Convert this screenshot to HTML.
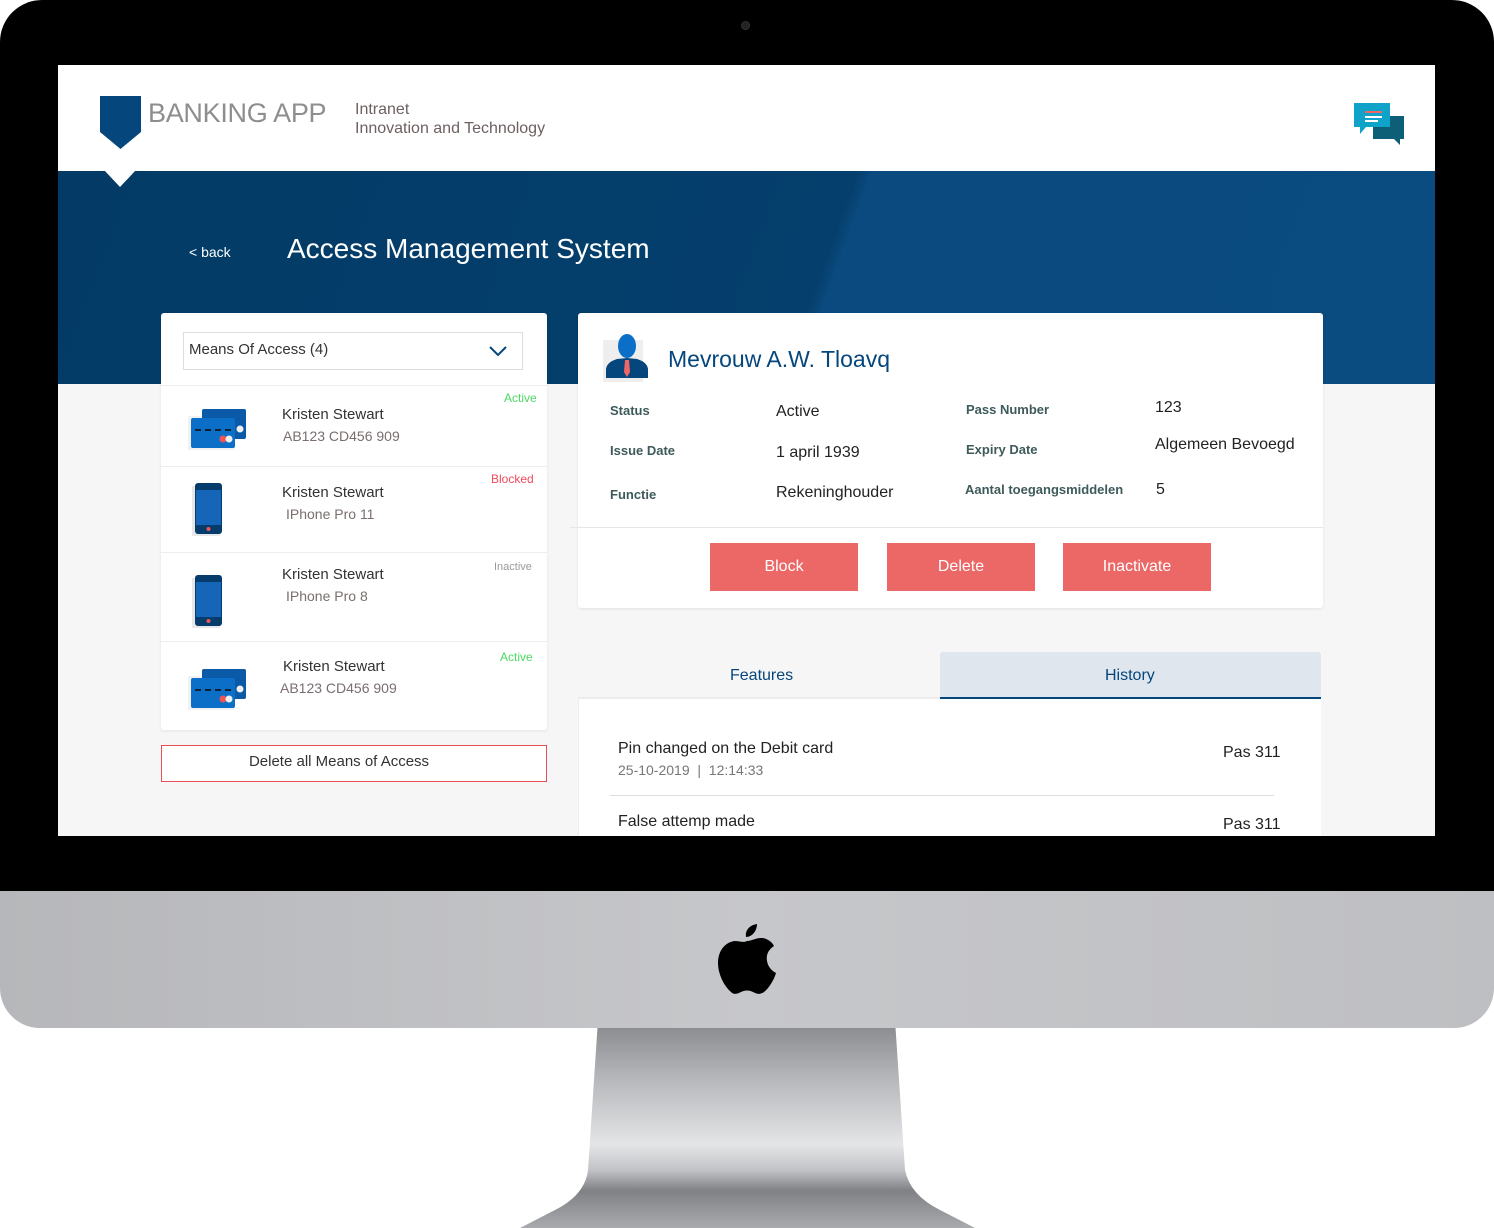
<!DOCTYPE html>
<html><head><meta charset="utf-8"><style>
*{margin:0;padding:0;box-sizing:border-box}
body{width:1494px;height:1228px;background:#fff;position:relative;overflow:hidden;font-family:"Liberation Sans",sans-serif}
.a{position:absolute}
.t{position:absolute;white-space:nowrap}
.lb{font-size:13px;color:#3e5a5a;font-weight:bold}
</style></head><body>
<svg class="a" style="left:0;top:1020px" width="1494" height="208">
<defs><linearGradient id="st" x1="0" y1="0" x2="0" y2="1">
<stop offset="0" stop-color="#86878b"/><stop offset=".3" stop-color="#b9babd"/><stop offset=".6" stop-color="#e4e5e7"/><stop offset=".72" stop-color="#c2c3c6"/><stop offset=".82" stop-color="#808185"/><stop offset="1" stop-color="#a9aaad"/></linearGradient></defs>
<path d="M598 0 L895 0 L905 150 Q910 175 940 190 L975 208 L520 208 L555 190 Q585 175 588 150 Z" fill="url(#st)"/>
</svg>
<div class="a" style="left:0;top:0;width:1494px;height:891px;background:#000;border-radius:42px 42px 0 0"></div>
<div class="a" style="left:741px;top:21px;width:9px;height:9px;border-radius:50%;background:#222;border:1px solid #333"></div>
<div class="a" style="left:0;top:891px;width:1494px;height:137px;background:linear-gradient(90deg,#b6b7ba,#c6c7ca 50%,#bebfc2);border-radius:0 0 40px 40px"></div>
<svg class="a" style="left:717px;top:922px" width="60" height="74" viewBox="0 0 60 74">
<path d="M40 2 C40 9 35 15 29 15 C28 8 33 3 40 2 Z M30 19 C35 19 38 16 44 16 C50 16 55 20 57 24 C51 28 49 33 50 39 C51 45 55 49 59 51 C57 58 52 66 47 70 C43 73 40 72 36 70 C32 68 28 68 24 70 C20 72 17 73 14 70 C7 64 1 52 1 41 C1 29 8 20 18 19 C23 19 26 21 30 19 Z" fill="#000"/>
</svg>
<div class="a" style="left:58px;top:65px;width:1377px;height:771px;background:#f6f6f6;overflow:hidden">
  <div class="a" style="left:0;top:0;width:1377px;height:106px;background:#fff"></div>
  <div class="a" style="left:0;top:106px;width:1377px;height:213px;background:linear-gradient(110deg,#033b66 0%,#053f6d 55%,#0a4a7e 56%,#0a4b80 100%)"></div>
</div>
<svg class="a" style="left:100px;top:96px" width="42" height="54"><path d="M0 0H41V36L20.5 53L0 36Z" fill="#05467c"/></svg>
<svg class="a" style="left:104px;top:170px" width="32" height="18"><path d="M0 0H32L16 17Z" fill="#fff"/></svg>
<div class="t" style="left:148px;top:98px;font-size:27px;color:#8e8e8e;letter-spacing:-0.3px">BANKING APP</div>
<div class="t" style="left:355px;top:100px;font-size:16px;color:#6e6060;line-height:19px">Intranet<br>Innovation and Technology</div>
<svg class="a" style="left:1352px;top:102px" width="54" height="44">
<path d="M21 14H52V37H48L48 43L42 37H21Z" fill="#0d5f77"/>
<path d="M2 1H38V25H14L8 32V25H2Z" fill="#0fa3c9"/>
<rect x="13" y="9" width="17" height="2" fill="#f06565"/><rect x="13" y="14" width="17" height="2" fill="#fff"/><rect x="13" y="18" width="13" height="2" fill="#fff"/>
</svg>
<div class="t" style="left:189px;top:244px;font-size:14px;color:#fff">&lt; back</div>
<div class="t" style="left:287px;top:233px;font-size:28px;color:#fff">Access Management System</div>
<div class="a" style="left:161px;top:313px;width:386px;height:417px;background:#fff;border-radius:3px;box-shadow:0 1px 3px rgba(0,0,0,.08)"></div>
<div class="a" style="left:183px;top:332px;width:340px;height:38px;border:1px solid #ddd"></div>
<div class="t" style="left:189px;top:341px;font-size:15px;color:#333">Means Of Access (4)</div>
<svg class="a" style="left:488px;top:345px" width="20" height="12"><path d="M2 2L10 10L18 2" stroke="#05467c" stroke-width="2" fill="none"/></svg>
<div class="a" style="left:161px;top:385px;width:386px;height:1px;background:#eee"></div>
<div class="a" style="left:161px;top:466px;width:386px;height:1px;background:#eee"></div>
<div class="a" style="left:161px;top:552px;width:386px;height:1px;background:#eee"></div>
<div class="a" style="left:161px;top:641px;width:386px;height:1px;background:#eee"></div>
<svg class="a" style="left:188px;top:406px" width="60" height="46"><rect x="0" y="10" width="46" height="34" fill="#e8e8e8" opacity=".6"/><rect x="14" y="3" width="44" height="30" rx="2" fill="#0a5aa8"/><rect x="3" y="12" width="44" height="30" rx="2" fill="#0b6fc7"/><path d="M7 24H45" stroke="#123" stroke-width="2" stroke-dasharray="6 4"/><circle cx="52" cy="23" r="3.5" fill="#eee"/><circle cx="35" cy="33" r="3.5" fill="#e55"/><circle cx="41" cy="33" r="3.5" fill="#eee"/></svg>
<svg class="a" style="left:188px;top:666px" width="60" height="46"><rect x="0" y="10" width="46" height="34" fill="#e8e8e8" opacity=".6"/><rect x="14" y="3" width="44" height="30" rx="2" fill="#0a5aa8"/><rect x="3" y="12" width="44" height="30" rx="2" fill="#0b6fc7"/><path d="M7 24H45" stroke="#123" stroke-width="2" stroke-dasharray="6 4"/><circle cx="52" cy="23" r="3.5" fill="#eee"/><circle cx="35" cy="33" r="3.5" fill="#e55"/><circle cx="41" cy="33" r="3.5" fill="#eee"/></svg>
<svg class="a" style="left:192px;top:482px" width="34" height="54"><rect x="0" y="4" width="28" height="50" fill="#e8e8e8"/><rect x="3" y="1" width="27" height="51" rx="3" fill="#063c6b"/><rect x="4" y="8" width="25" height="35" fill="#1565b8"/><circle cx="16.5" cy="47" r="2" fill="#e55"/></svg>
<svg class="a" style="left:192px;top:574px" width="34" height="54"><rect x="0" y="4" width="28" height="50" fill="#e8e8e8"/><rect x="3" y="1" width="27" height="51" rx="3" fill="#063c6b"/><rect x="4" y="8" width="25" height="35" fill="#1565b8"/><circle cx="16.5" cy="47" r="2" fill="#e55"/></svg>
<div class="t" style="left:282px;top:406px;font-size:15px;color:#333">Kristen Stewart</div>
<div class="t" style="left:283px;top:428px;font-size:14px;color:#7a6e6e">AB123 CD456 909</div>
<div class="t" style="left:504px;top:391px;font-size:12px;color:#4cd964">Active</div>
<div class="t" style="left:282px;top:484px;font-size:15px;color:#333">Kristen Stewart</div>
<div class="t" style="left:286px;top:506px;font-size:14px;color:#7a6e6e">IPhone Pro 11</div>
<div class="t" style="left:491px;top:472px;font-size:12px;color:#f04a5d">Blocked</div>
<div class="t" style="left:282px;top:566px;font-size:15px;color:#333">Kristen Stewart</div>
<div class="t" style="left:286px;top:588px;font-size:14px;color:#7a6e6e">IPhone Pro 8</div>
<div class="t" style="left:494px;top:561px;font-size:11px;color:#999">Inactive</div>
<div class="t" style="left:283px;top:658px;font-size:15px;color:#333">Kristen Stewart</div>
<div class="t" style="left:280px;top:680px;font-size:14px;color:#7a6e6e">AB123 CD456 909</div>
<div class="t" style="left:500px;top:650px;font-size:12px;color:#4cd964">Active</div>
<div class="a" style="left:161px;top:745px;width:386px;height:37px;border:1px solid #e94e57;background:#fff"></div>
<div class="t" style="left:161px;top:753px;width:356px;text-align:center;font-size:15px;color:#333">Delete all Means of Access</div>
<div class="a" style="left:578px;top:313px;width:745px;height:295px;background:#fff;border-radius:3px;box-shadow:0 1px 3px rgba(0,0,0,.08)"></div>
<svg class="a" style="left:603px;top:332px" width="46" height="50"><rect x="0" y="8" width="40" height="42" fill="#eee"/><path d="M3 46V37Q4 30 14 27L24 26L34 27Q44 30 45 37V46Z" fill="#05467c"/><ellipse cx="24" cy="14" rx="9" ry="12" fill="#0b6fc7"/><path d="M22 28H26L27 40L24 45L21 40Z" fill="#f06565"/></svg>
<div class="t" style="left:668px;top:346px;font-size:23px;color:#05467c">Mevrouw A.W. Tloavq</div>
<div class="t lb" style="left:610px;top:403px">Status</div>
<div class="t lb" style="left:610px;top:443px">Issue Date</div>
<div class="t lb" style="left:610px;top:487px">Functie</div>
<div class="t" style="left:776px;top:403px;font-size:16px;color:#222">Active</div>
<div class="t" style="left:776px;top:444px;font-size:16px;color:#222">1 april 1939</div>
<div class="t" style="left:776px;top:484px;font-size:16px;color:#222">Rekeninghouder</div>
<div class="t lb" style="left:966px;top:402px">Pass Number</div>
<div class="t lb" style="left:966px;top:442px">Expiry Date</div>
<div class="t lb" style="left:965px;top:482px">Aantal toegangsmiddelen</div>
<div class="t" style="left:1155px;top:399px;font-size:16px;color:#222">123</div>
<div class="t" style="left:1155px;top:436px;font-size:16px;color:#222">Algemeen Bevoegd</div>
<div class="t" style="left:1156px;top:481px;font-size:16px;color:#222">5</div>
<div class="a" style="left:570px;top:527px;width:753px;height:1px;background:#e6e6e6"></div>
<div class="a" style="left:710px;top:543px;width:148px;height:48px;background:#ec6867;color:#fff;font-size:16px;text-align:center;line-height:48px">Block</div>
<div class="a" style="left:887px;top:543px;width:148px;height:48px;background:#ec6867;color:#fff;font-size:16px;text-align:center;line-height:48px">Delete</div>
<div class="a" style="left:1063px;top:543px;width:148px;height:48px;background:#ec6867;color:#fff;font-size:16px;text-align:center;line-height:48px">Inactivate</div>
<div class="a" style="left:940px;top:652px;width:381px;height:47px;background:#dfe6ed;border-radius:3px 3px 0 0;border-bottom:2px solid #05467c"></div>
<div class="t" style="left:730px;top:667px;font-size:16px;color:#05467c">Features</div>
<div class="t" style="left:1105px;top:667px;font-size:16px;color:#05467c">History</div>
<div class="a" style="left:578px;top:699px;width:743px;height:137px;background:#fff;border-left:1px solid #eee"></div>
<div class="a" style="left:578px;top:697px;width:362px;height:2px;background:#ececec"></div>
<div class="t" style="left:618px;top:740px;font-size:16px;color:#222">Pin changed on the Debit card</div>
<div class="t" style="left:618px;top:762px;font-size:14px;color:#777">25-10-2019 &nbsp;| &nbsp;12:14:33</div>
<div class="t" style="left:1223px;top:744px;font-size:16px;color:#222">Pas 311</div>
<div class="a" style="left:610px;top:795px;width:664px;height:1px;background:#ddd"></div>
<div class="t" style="left:618px;top:813px;font-size:16px;color:#222">False attemp made</div>
<div class="t" style="left:1223px;top:816px;font-size:16px;color:#222">Pas 311</div>
<div class="a" style="left:58px;top:836px;width:1377px;height:55px;background:#000"></div>
</body></html>
